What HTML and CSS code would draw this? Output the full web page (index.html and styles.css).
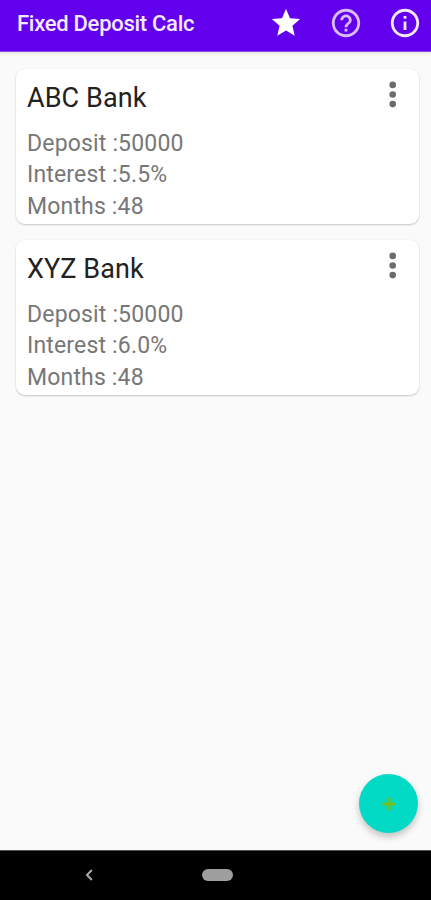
FILE: index.html
```html
<!DOCTYPE html>
<html lang="en">
<head>
<meta charset="utf-8">
<title>Fixed Deposit Calc</title>
<link rel="stylesheet" href="styles.css">
</head>
<body>
<div class="screen">
  <header class="app-bar">
    <h1 class="app-title">Fixed Deposit Calc</h1>
    <nav class="actions">
      <svg class="icon star" viewBox="0 0 24 24"><path d="M12 17.27 18.18 21l-1.64-7.03L22 9.24l-7.19-.61L12 2 9.19 8.63 2 9.24l5.46 4.73L5.82 21z"/></svg>
      <svg class="icon help" viewBox="0 0 24 24"><path d="M11 18h2v-2h-2v2zm1-16C6.48 2 2 6.48 2 12s4.48 10 10 10 10-4.48 10-10S17.52 2 12 2zm0 18c-4.41 0-8-3.59-8-8s3.59-8 8-8 8 3.59 8 8-3.59 8-8 8zm0-14c-2.21 0-4 1.79-4 4h2c0-1.1.9-2 2-2s2 .9 2 2c0 2-3 1.75-3 5h2c0-2.25 3-2.5 3-5 0-2.21-1.79-4-4-4z"/></svg>
      <svg class="icon info" viewBox="0 0 24 24"><path d="M11 7h2v2h-2zm0 4h2v6h-2zm1-9C6.48 2 2 6.48 2 12s4.48 10 10 10 10-4.48 10-10S17.52 2 12 2zm0 18c-4.41 0-8-3.59-8-8s3.59-8 8-8 8 3.59 8 8-3.59 8-8 8z"/></svg>
    </nav>
  </header>
  <main class="content">
    <article class="card">
      <div class="details">
        <h2 class="bank">ABC Bank</h2>
        <p class="line">Deposit :50000</p>
        <p class="line">Interest :5.5%</p>
        <p class="line">Months :48</p>
      </div>
      <svg class="more" viewBox="0 0 8 28"><circle cx="3.7" cy="3.9" r="3.3"/><circle cx="3.7" cy="13.5" r="3.3"/><circle cx="3.7" cy="23.1" r="3.3"/></svg>
    </article>
    <article class="card">
      <div class="details">
        <h2 class="bank">XYZ Bank</h2>
        <p class="line">Deposit :50000</p>
        <p class="line">Interest :6.0%</p>
        <p class="line">Months :48</p>
      </div>
      <svg class="more" viewBox="0 0 8 28"><circle cx="3.7" cy="3.9" r="3.3"/><circle cx="3.7" cy="13.5" r="3.3"/><circle cx="3.7" cy="23.1" r="3.3"/></svg>
    </article>
    <button class="fab" aria-label="Add"><svg viewBox="0 0 14 14"><path d="M7 .5v13M.5 7h13"/></svg></button>
  </main>
  <footer class="nav-bar">
    <svg class="back" viewBox="0 0 8 12"><path d="M6.8 1 2 6l4.8 5"/></svg>
    <span class="home"></span>
  </footer>
</div>
</body>
</html>
```

FILE: styles.css
```css
* { box-sizing: border-box; }
body {
  margin: 0;
  font-family: Roboto, sans-serif;
  background: #fafafa;
}
.screen {
  width: 431px;
  height: 900px;
  display: flex;
  flex-direction: column;
  overflow: hidden;
}
.app-bar {
  height: 52px;
  flex: none;
  background: #6200ee;
  border-bottom: 1px solid #8b4ce9;
  box-shadow: 0 1px 3px rgba(0, 0, 0, .12);
  display: flex;
  justify-content: space-between;
  padding: 0 9px 0 17px;
}
.app-title {
  margin: 0;
  font-size: 22px;
  line-height: 48px;
  font-weight: 500;
  letter-spacing: -.28px;
  color: #f3eaff;
  white-space: nowrap;
}
.actions {
  display: flex;
  gap: 25.5px;
  padding-top: 5.5px;
}
.icon { width: 34px; height: 34px; fill: #fff; }
.help { fill: #d9bdfb; }
.info { fill: #f3e9ff; }
.content {
  position: relative;
  flex: 1;
  padding: 17px 12px 0 16px;
  display: flex;
  flex-direction: column;
  gap: 16px;
}
.card {
  height: 155px;
  background: #fff;
  border-radius: 9px;
  box-shadow: 0 1px 2px rgba(0, 0, 0, .2), 0 0 2px rgba(0, 0, 0, .05);
  display: flex;
  justify-content: space-between;
  padding: 12px 22px 0 11px;
}
.bank {
  margin: 0 0 12px;
  font-size: 27px;
  line-height: 35px;
  font-weight: 400;
  letter-spacing: .08px;
  color: #222;
}
.line {
  margin: 0;
  font-size: 23px;
  line-height: 31.3px;
  letter-spacing: .17px;
  color: #777;
}
.more { width: 8px; height: 28px; fill: #6c6c6c; }
.fab {
  position: absolute;
  right: 13px;
  bottom: 17px;
  width: 59px;
  height: 59px;
  padding: 0;
  border: 0;
  border-radius: 50%;
  background: #03dac5;
  box-shadow: 0 4px 7px rgba(0, 0, 0, .22);
  display: flex;
  align-items: center;
  justify-content: center;
}
.fab svg { width: 14px; height: 14px; fill: none; stroke: #70bf24; stroke-width: 3; }
.nav-bar {
  height: 50px;
  flex: none;
  background: #000;
  border-top: 1px solid #555;
  display: flex;
  align-items: center;
  padding: 0 0 2px 85px;
}
.back { width: 8px; height: 12px; fill: none; stroke: #aaa; stroke-width: 2; }
.home {
  width: 31px;
  height: 12px;
  margin-left: 109px;
  border-radius: 6px;
  background: #9e9e9e;
}
```
